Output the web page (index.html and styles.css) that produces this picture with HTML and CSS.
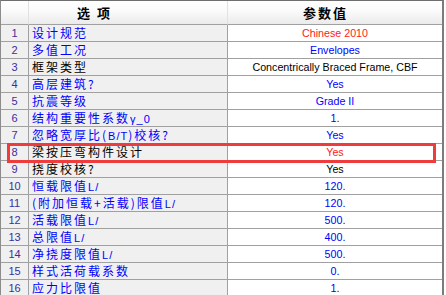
FILE: index.html
```html
<!DOCTYPE html>
<html lang="zh-CN">
<head>
  <meta charset="UTF-8" />
  <title>参数设置</title>
  <link rel="stylesheet" href="styles.css">
</head>
<body>

<div class="sheet">
  <div class="row head">
    <div class="cell num"></div>
    <div class="cell opt"><span class="head-opt">选 项</span></div>
    <div class="cell val"><span class="head-val">参数值</span></div>
  </div>

  <div class="row">
    <div class="cell num">1</div>
    <div class="cell opt blue">设计规范</div>
    <div class="cell val red">Chinese 2010</div>
  </div>
  <div class="row">
    <div class="cell num">2</div>
    <div class="cell opt blue">多值工况</div>
    <div class="cell val blue">Envelopes</div>
  </div>
  <div class="row">
    <div class="cell num">3</div>
    <div class="cell opt">框架类型</div>
    <div class="cell val">Concentrically Braced Frame, CBF</div>
  </div>
  <div class="row">
    <div class="cell num">4</div>
    <div class="cell opt blue">高层建筑?</div>
    <div class="cell val blue">Yes</div>
  </div>
  <div class="row">
    <div class="cell num">5</div>
    <div class="cell opt blue">抗震等级</div>
    <div class="cell val blue">Grade II</div>
  </div>
  <div class="row">
    <div class="cell num">6</div>
    <div class="cell opt blue">结构重要性系数<span class="lat">γ_0</span></div>
    <div class="cell val blue">1.</div>
  </div>
  <div class="row">
    <div class="cell num">7</div>
    <div class="cell opt blue">忽略宽厚比(<span class="lat">B/T</span>)校核?</div>
    <div class="cell val blue">Yes</div>
  </div>
  <div class="row">
    <div class="cell num">8</div>
    <div class="cell opt">梁按压弯构件设计</div>
    <div class="cell val red">Yes</div>
  </div>
  <div class="row">
    <div class="cell num">9</div>
    <div class="cell opt">挠度校核?</div>
    <div class="cell val">Yes</div>
  </div>
  <div class="row">
    <div class="cell num">10</div>
    <div class="cell opt blue">恒载限值<span class="lat">L/</span></div>
    <div class="cell val blue">120.</div>
  </div>
  <div class="row">
    <div class="cell num">11</div>
    <div class="cell opt blue">(附加恒载+活载)限值<span class="lat">L/</span></div>
    <div class="cell val blue">120.</div>
  </div>
  <div class="row">
    <div class="cell num">12</div>
    <div class="cell opt blue">活载限值<span class="lat">L/</span></div>
    <div class="cell val blue">500.</div>
  </div>
  <div class="row">
    <div class="cell num">13</div>
    <div class="cell opt blue">总限值<span class="lat">L/</span></div>
    <div class="cell val blue">400.</div>
  </div>
  <div class="row">
    <div class="cell num">14</div>
    <div class="cell opt blue">净挠度限值<span class="lat">L/</span></div>
    <div class="cell val blue">500.</div>
  </div>
  <div class="row">
    <div class="cell num">15</div>
    <div class="cell opt blue">样式活荷载系数</div>
    <div class="cell val blue">0.</div>
  </div>
  <div class="row">
    <div class="cell num">16</div>
    <div class="cell opt blue">应力比限值</div>
    <div class="cell val blue">1.</div>
  </div>

  <!-- highlight frame round row 8 -->
  <div class="mark"></div>
</div>

</body>
</html>
```

FILE: styles.css
```css
* { box-sizing: border-box; }
body {
  margin: 0;
  background: #fff;
  overflow: hidden;
}
.sheet {
  position: relative;
  width: 444px;
  border-top: 1px solid #6e6e6e;
  border-left: 1px solid #8c8c8c;
  border-right: 2px solid #7c7c7c;
  font-family: "Liberation Sans", Arial, sans-serif;
}
.row {
  display: grid;
  grid-template-columns: 28px 199px 214px;
  height: 17px;
}
.cell {
  height: 17px;
  border-bottom: 1px solid #a0a0a0;
  border-right: 1px solid #a0a0a0;
  line-height: 16px;
  white-space: nowrap;
  overflow: hidden;
}
.cell:last-child { border-right: none; }
.num {
  background: #f0f0f0;
  color: #3a2f9e;
  font-size: 11px;
  text-align: center;
}
.opt {
  background: #f0f0f0;
  color: #000;
  padding-left: 3px;
  font-family: "Noto Sans CJK SC", "Liberation Sans", sans-serif;
  font-size: 12px;
  letter-spacing: 2px;
}
.opt .lat {
  font-family: "Liberation Sans", Arial, sans-serif;
  font-size: 11px;
  letter-spacing: 1px;
}
.val {
  background: #fff;
  color: #000;
  font-size: 10.7px;
  text-align: center;
}
.blue { color: #0000ff; }
.red { color: #ff2020; }

/* header strip */
.row.head { height: 24px; }
.head .cell {
  height: 24px;
  line-height: 23px;
  background: linear-gradient(#ffffff 0%, #fafafa 45%, #ebebeb 100%);
  border-right-color: #e2e2e2;
  border-bottom-color: #a0a0a0;
  font-family: "Noto Sans CJK SC", "Liberation Sans", sans-serif;
  font-weight: bold;
  font-size: 13px;
  color: #000;
  letter-spacing: 2px;
  text-align: left;
}
.head-opt { padding-left: 45px; }
.head-val { padding-left: 75px; }

.mark {
  position: absolute;
  left: 6px;
  top: 142px;
  width: 429px;
  height: 20px;
  border: 3px solid #ee3b3b;
}
```
